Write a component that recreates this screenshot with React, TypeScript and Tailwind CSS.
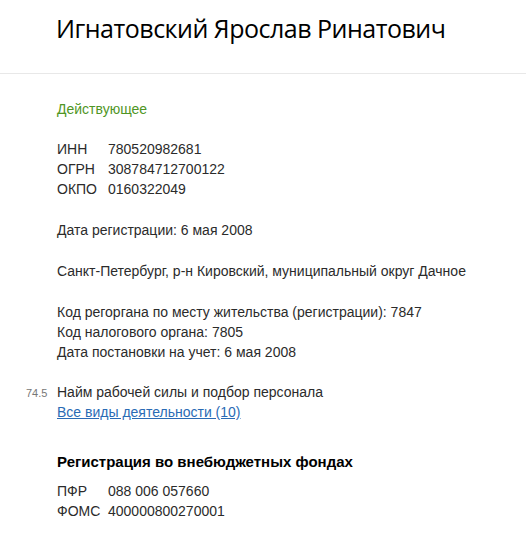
import React from 'react';

const codes = [
  { label: 'ИНН', value: '780520982681' },
  { label: 'ОГРН', value: '308784712700122' },
  { label: 'ОКПО', value: '0160322049' },
];

const funds = [
  { label: 'ПФР', value: '088 006 057660' },
  { label: 'ФОМС', value: '400000800270001' },
];

function CodeTable({ rows }: { rows: { label: string; value: string }[] }) {
  return (
    <div className="flex flex-col">
      {rows.map((r) => (
        <div key={r.label} className="flex h-5 items-center">
          <span className="w-[51px]">{r.label}</span>
          <span>{r.value}</span>
        </div>
      ))}
    </div>
  );
}

export default function App() {
  return (
    <div className="w-[526px] h-[533px] bg-white overflow-hidden text-[14px] leading-5 text-[#2b2b2b]" style={{ fontFamily: '"Liberation Sans", Arial, sans-serif' }}>
      <div className="h-[74px] border-b border-[#e8e8e8] pl-[56px] pt-[10px]">
        <h1 className="text-[25px] leading-[36px] tracking-[-0.5px] text-black font-normal" style={{ fontFamily: '"Open Sans", "Noto Sans", sans-serif' }}>
          Игнатовский Ярослав Ринатович
        </h1>
      </div>

      <div className="pl-[57px] pt-[25px]">
        <div className="text-[#4f9625]">Действующее</div>

        <div className="mt-5">
          <CodeTable rows={codes} />
        </div>

        <div className="mt-[21px]">Дата регистрации: 6 мая 2008</div>

        <div className="mt-[21px]">Санкт-Петербург, р-н Кировский, муниципальный округ Дачное</div>

        <div className="mt-[21px]">
          <div>Код регоргана по месту жительства (регистрации): 7847</div>
          <div>Код налогового органа: 7805</div>
          <div>Дата постановки на учет: 6 мая 2008</div>
        </div>

        <div className="mt-5 relative">
          <span className="absolute left-[-31px] top-[1px] text-[11px] text-[#777]">74.5</span>
          <div>Найм рабочей силы и подбор персонала</div>
          <a href="#" className="text-[#2a6bb5] underline">Все виды деятельности (10)</a>
        </div>

        <h2 className="mt-[30px] text-[15px] font-bold leading-5 text-black">Регистрация во внебюджетных фондах</h2>

        <div className="mt-[9px]">
          <CodeTable rows={funds} />
        </div>
      </div>
    </div>
  );
}
